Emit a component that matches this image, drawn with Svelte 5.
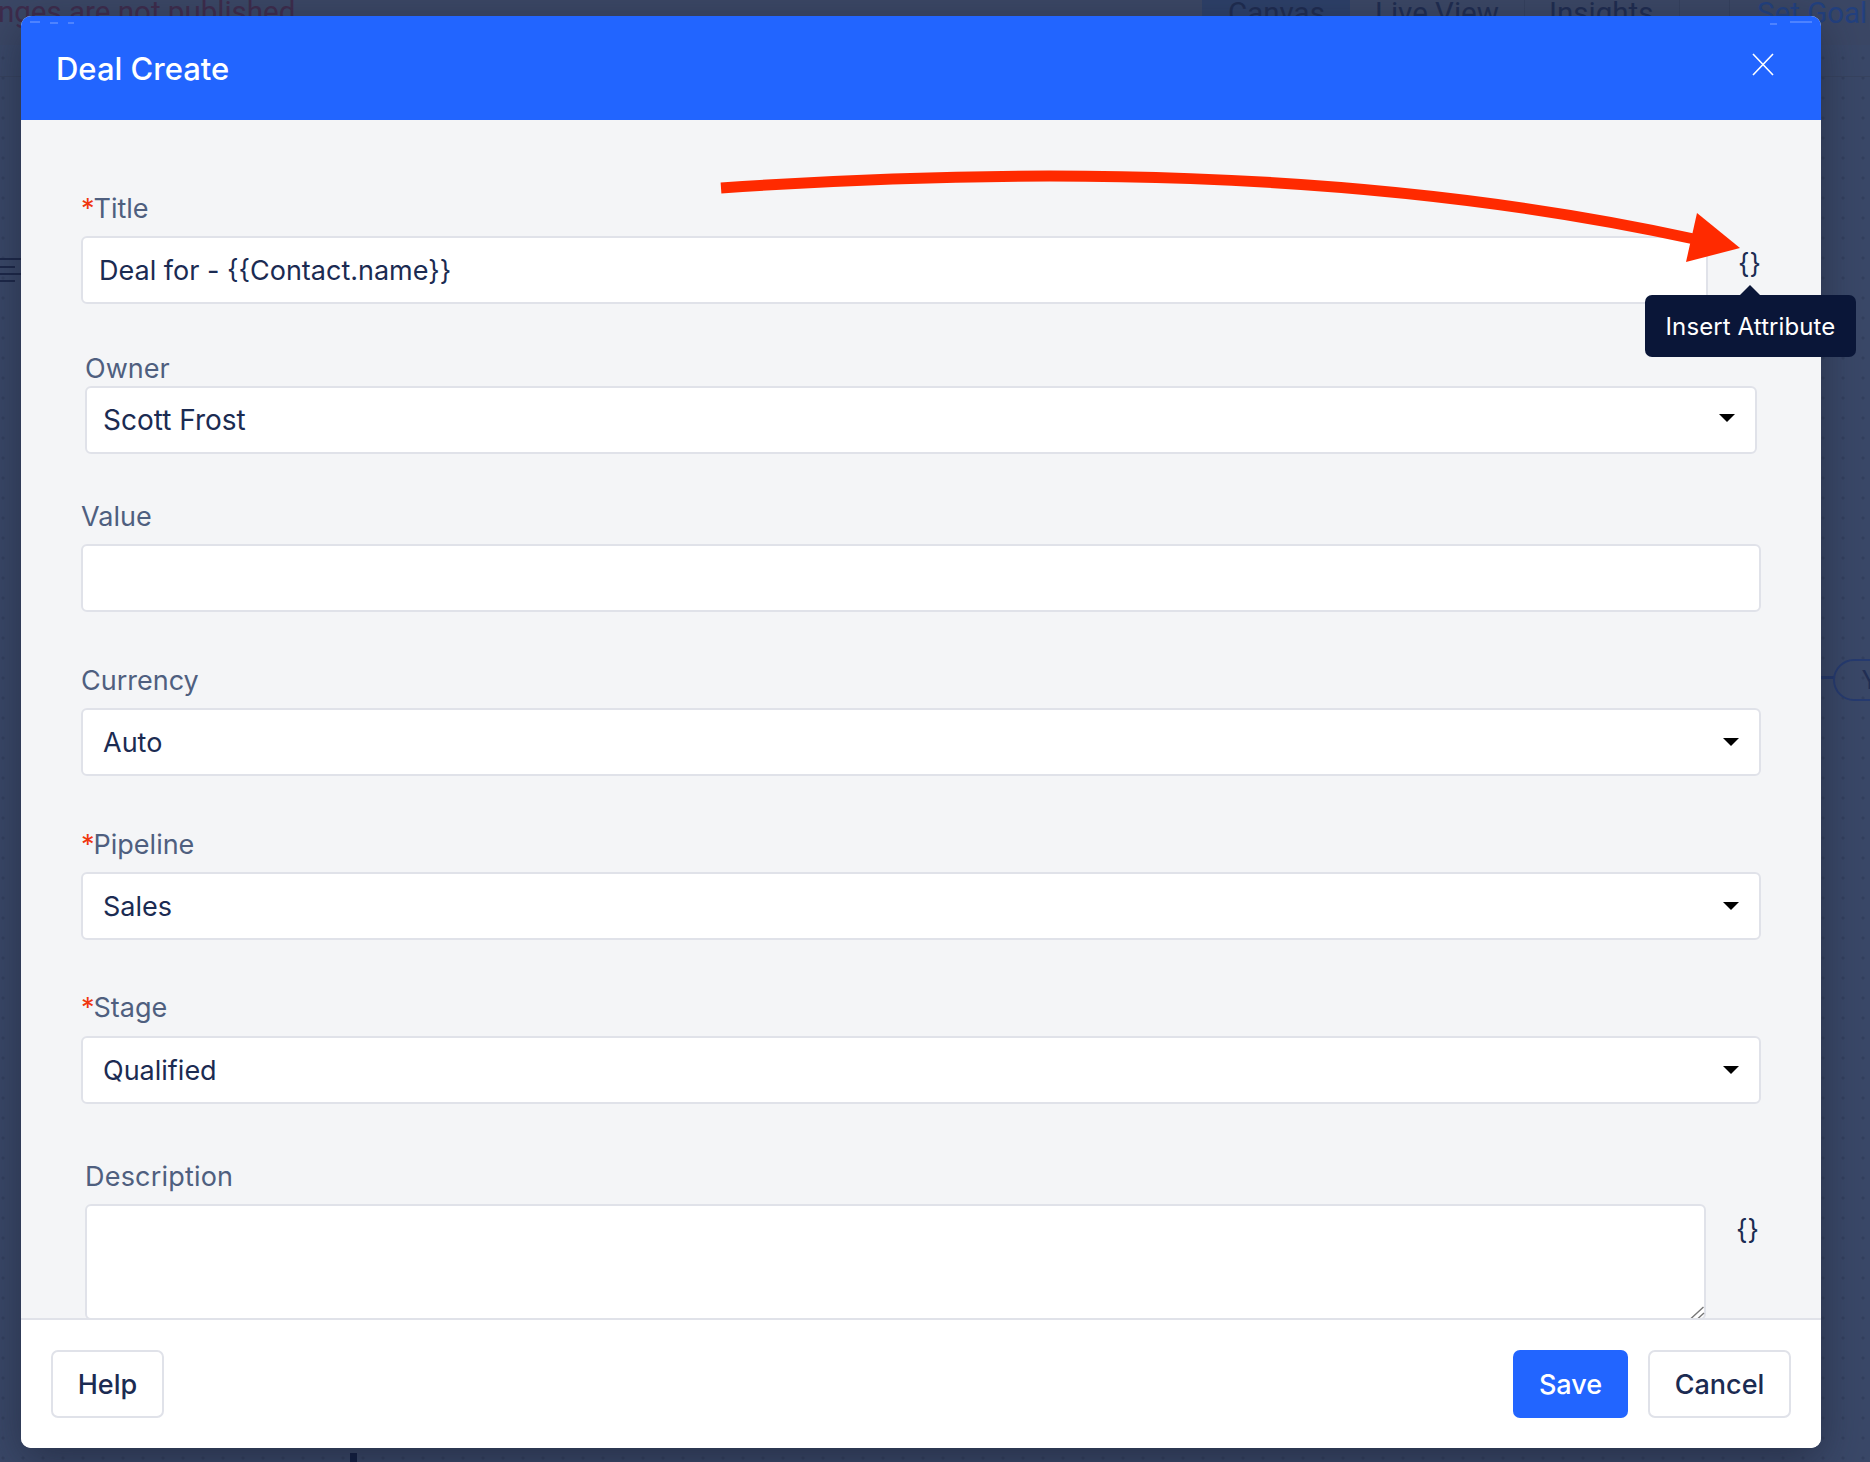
<script>
  const selects = [
    { cls: 'currency', label: 'Currency', value: 'Auto', req: false },
    { cls: 'pipeline', label: 'Pipeline', value: 'Sales', req: true },
    { cls: 'stage', label: 'Stage', value: 'Qualified', req: true }
  ];
</script>

<div class="page">
  <div class="behind" aria-hidden="true">
    <span class="tabbar"></span>
    <span class="rule"></span>
    <span class="notice">nges are not published</span>
    <span class="tab active">Canvas</span>
    <span class="tab live">Live View</span>
    <span class="tab insights">Insights</span>
    <span class="sep s1"></span><span class="sep s2"></span><span class="sep s3"></span>
    <span class="tab goal">Set Goal</span>
    <span class="ham h1"></span><span class="ham h2"></span><span class="ham h3"></span><span class="ham h4"></span>
    <span class="link"></span>
    <span class="pill">Y</span>
    <span class="stub"></span>
  </div>

  <div class="modal">
    <header class="head">
      <h1>Deal Create</h1>
      <button class="close" aria-label="Close">
        <svg width="22" height="23" viewBox="0 0 22 23"><path d="M1 1 21 22M21 1 1 22" stroke="#fff" stroke-width="1.6" fill="none" /></svg>
      </button>
    </header>

    <div class="body">
      <div class="field title">
        <label for="t"><span class="req">*</span>Title</label>
        <div class="with-attr">
          <input id="t" class="control flat" value={'Deal for - {{Contact.name}}'} />
          <span class="attr">{'{}'}</span>
        </div>
      </div>

      <div class="field owner">
        <span class="label">Owner</span>
        <div class="control select"><span>Scott Frost</span><i class="caret"></i></div>
      </div>

      <div class="field value">
        <label for="v">Value</label>
        <input id="v" class="control" />
      </div>

      {#each selects as s}
        <div class="field {s.cls}">
          <span class="label">{#if s.req}<span class="req">*</span>{/if}{s.label}</span>
          <div class="control select"><span>{s.value}</span><i class="caret"></i></div>
        </div>
      {/each}

      <div class="field description">
        <label for="d">Description</label>
        <div class="with-attr desc-row">
          <textarea id="d" class="control area"></textarea>
          <svg class="grip" width="16" height="14" viewBox="0 0 16 14" aria-hidden="true">
            <path d="M1 13.5 13.5 2M8 13.5 14 8" stroke="#777" stroke-width="1.4" fill="none" />
          </svg>
          <span class="attr">{'{}'}</span>
        </div>
      </div>
    </div>

    <footer class="foot">
      <button class="btn help">Help</button>
      <div class="actions">
        <button class="btn primary">Save</button>
        <button class="btn cancel">Cancel</button>
      </div>
    </footer>
  </div>

  <div class="tip"><span class="tip-arrow"></span>Insert Attribute</div>

  <svg class="arrow" width="1870" height="300" viewBox="0 0 1870 300" aria-hidden="true">
    <path d="M30 22h10M50 23h8M68 23h6M1770 24h7M1790 22h22" stroke="#fff" stroke-opacity="0.4" stroke-width="1" fill="none" />
    <path d="M721 188C1010 168 1360 166 1694 239" fill="none" stroke="#ff2a00" stroke-width="11" />
    <path d="M1697 213 1740 248 1686 262Z" fill="#ff2a00" />
  </svg>
</div>

<style>
  :global(body) {
    margin: 0;
    background: #3a4868;
  }
  .page {
    position: relative;
    width: 1870px;
    height: 1462px;
    overflow: hidden;
    box-sizing: border-box;
    padding: 16px 0 0 21px;
    font-family: Inter, "Liberation Sans", sans-serif;
    background-color: #3a4868;
    background-image: radial-gradient(circle at 3px 18px, #33405e 1.3px, transparent 1.8px);
    background-size: 20px 20px;
  }

  .behind span {
    position: absolute;
    white-space: nowrap;
  }
  .notice {
    left: -2px;
    top: -8px;
    font: 400 29.5px/40px Roboto, sans-serif;
    color: #3e2c4c;
  }
  .tabbar {
    left: 0;
    top: 0;
    width: 1870px;
    height: 45px;
    background: #3b4765;
  }
  .rule {
    left: 0;
    top: 76px;
    width: 1870px;
    height: 1px;
    background: #37435f;
  }
  .tab {
    top: -7px;
    height: 52px;
    font: 400 29.5px/40px Roboto, sans-serif;
    color: #1f2c50;
  }
  .active {
    left: 1202px;
    width: 148px;
    box-sizing: border-box;
    padding-left: 26px;
    background: #2d4068;
  }
  .live { left: 1375px; }
  .insights { left: 1549px; }
  .goal { left: 1757px; color: #23417f; }
  .sep {
    top: 0;
    width: 1px;
    height: 45px;
    background: #35415e;
  }
  .s1 { left: 1524px; }
  .s2 { left: 1679px; }
  .s3 { left: 1729px; }
  .ham {
    left: 0;
    height: 2px;
    width: 21px;
    background: #1c2748;
  }
  .h1 { top: 258px; }
  .h2 { top: 266px; width: 15px; }
  .h3 { top: 273px; }
  .h4 { top: 280px; width: 15px; }
  .link {
    left: 1821px;
    top: 676px;
    width: 13px;
    height: 3px;
    background: #24386b;
  }
  .pill {
    left: 1833px;
    top: 659px;
    width: 80px;
    height: 42px;
    box-sizing: border-box;
    padding-left: 27px;
    border: 2px solid #263b70;
    border-radius: 21px;
    font: 400 26px/38px Roboto, sans-serif;
    color: #222f54;
  }
  .stub {
    left: 350px;
    top: 1453px;
    width: 7px;
    height: 9px;
    background: #0f1c40;
  }

  .modal {
    position: relative;
    display: flex;
    flex-direction: column;
    width: 1800px;
    height: 1432px;
    border-radius: 10px;
    overflow: hidden;
    background: #fff;
    box-shadow: 0 12px 44px rgba(24, 30, 48, 0.55);
  }
  .head {
    flex: none;
    display: flex;
    align-items: flex-start;
    justify-content: space-between;
    height: 104px;
    box-sizing: border-box;
    padding: 33px 47px 0 35px;
    background: #2265ff;
    color: #fff;
  }
  h1 {
    margin: 0;
    font-size: 31px;
    line-height: 40px;
    font-weight: 500;
  }
  .close {
    margin-top: 4px;
    padding: 0;
    border: 0;
    background: none;
    line-height: 0;
  }

  .body {
    flex: 1;
    min-height: 0;
    overflow: hidden;
    padding: 73px 60px 0;
    background: #f4f5f7;
  }
  .field {
    display: flex;
    flex-direction: column;
    gap: 11px;
  }
  label, .label {
    display: block;
    font-size: 27px;
    line-height: 32px;
    color: #4f5f7f;
  }
  .req {
    margin-right: -1px;
    color: #f0360f;
  }
  .owner {
    margin: 49px 0 0 4px;
    gap: 1px;
    width: 1672px;
  }
  .value { margin-top: 47px; }
  .currency { margin-top: 53px; }
  .pipeline { margin-top: 53px; }
  .stage { margin-top: 52px; gap: 12px; }
  .description { margin: 57px 0 0 4px; gap: 11px; }
  .description label { letter-spacing: 0.2px; }

  .control {
    display: block;
    box-sizing: border-box;
    width: 100%;
    height: 68px;
    padding: 0 16px;
    border: 2px solid #e0e2e9;
    border-radius: 6px;
    background: #fff;
    font: 400 27px Inter, sans-serif;
    color: #1b2b52;
    outline: none;
  }
  .owner .control { padding-left: 16px; font-size: 28px; }
  .select {
    display: flex;
    align-items: center;
    justify-content: space-between;
    padding: 0 20px;
  }
  .caret {
    width: 0;
    height: 0;
    border-left: 8px solid transparent;
    border-right: 8px solid transparent;
    border-top: 8px solid #000;
  }
  .owner .caret { margin-top: -4px; }
  .with-attr {
    position: relative;
    display: flex;
    align-items: flex-start;
  }
  .flat {
    width: 1630px;
    border-radius: 6px 0 0 6px;
  }
  .attr {
    flex: 1;
    padding: 11px 0 0 30px;
    text-align: center;
    font-size: 27px;
    line-height: 33px;
    color: #1b2b52;
  }
  .desc-row { width: 1674px; }
  .desc-row .attr { padding-top: 9px; }
  .area {
    flex: none;
    width: 1621px;
    height: 116px;
    resize: none;
  }
  .grip {
    position: absolute;
    left: 1605px;
    top: 101px;
  }
  .tip {
    position: absolute;
    left: 1645px;
    top: 295px;
    width: 211px;
    height: 62px;
    border-radius: 7px;
    background: #0a1638;
    color: #fff;
    font-size: 24px;
    line-height: 64px;
    text-align: center;
    letter-spacing: 0.1px;
  }
  .tip-arrow {
    position: absolute;
    left: 95px;
    top: -10px;
    width: 0;
    height: 0;
    border-left: 10px solid transparent;
    border-right: 10px solid transparent;
    border-bottom: 10px solid #0a1638;
  }

  .foot {
    flex: none;
    display: flex;
    justify-content: space-between;
    height: 130px;
    box-sizing: border-box;
    padding: 30px 30px 0;
    border-top: 2px solid #e0e2e9;
    background: #fff;
  }
  .actions {
    display: flex;
    gap: 20px;
  }
  .btn {
    height: 68px;
    box-sizing: border-box;
    padding: 0;
    border: 2px solid #e0e2e9;
    border-radius: 7px;
    background: #fff;
    font: 500 27px Inter, sans-serif;
    color: #1b2b52;
  }
  .help { width: 113px; }
  .cancel { width: 143px; }
  .primary {
    width: 115px;
    border: 0;
    background: #2265ff;
    color: #fff;
  }
  .arrow {
    position: absolute;
    left: 0;
    top: 0;
    pointer-events: none;
  }
</style>
